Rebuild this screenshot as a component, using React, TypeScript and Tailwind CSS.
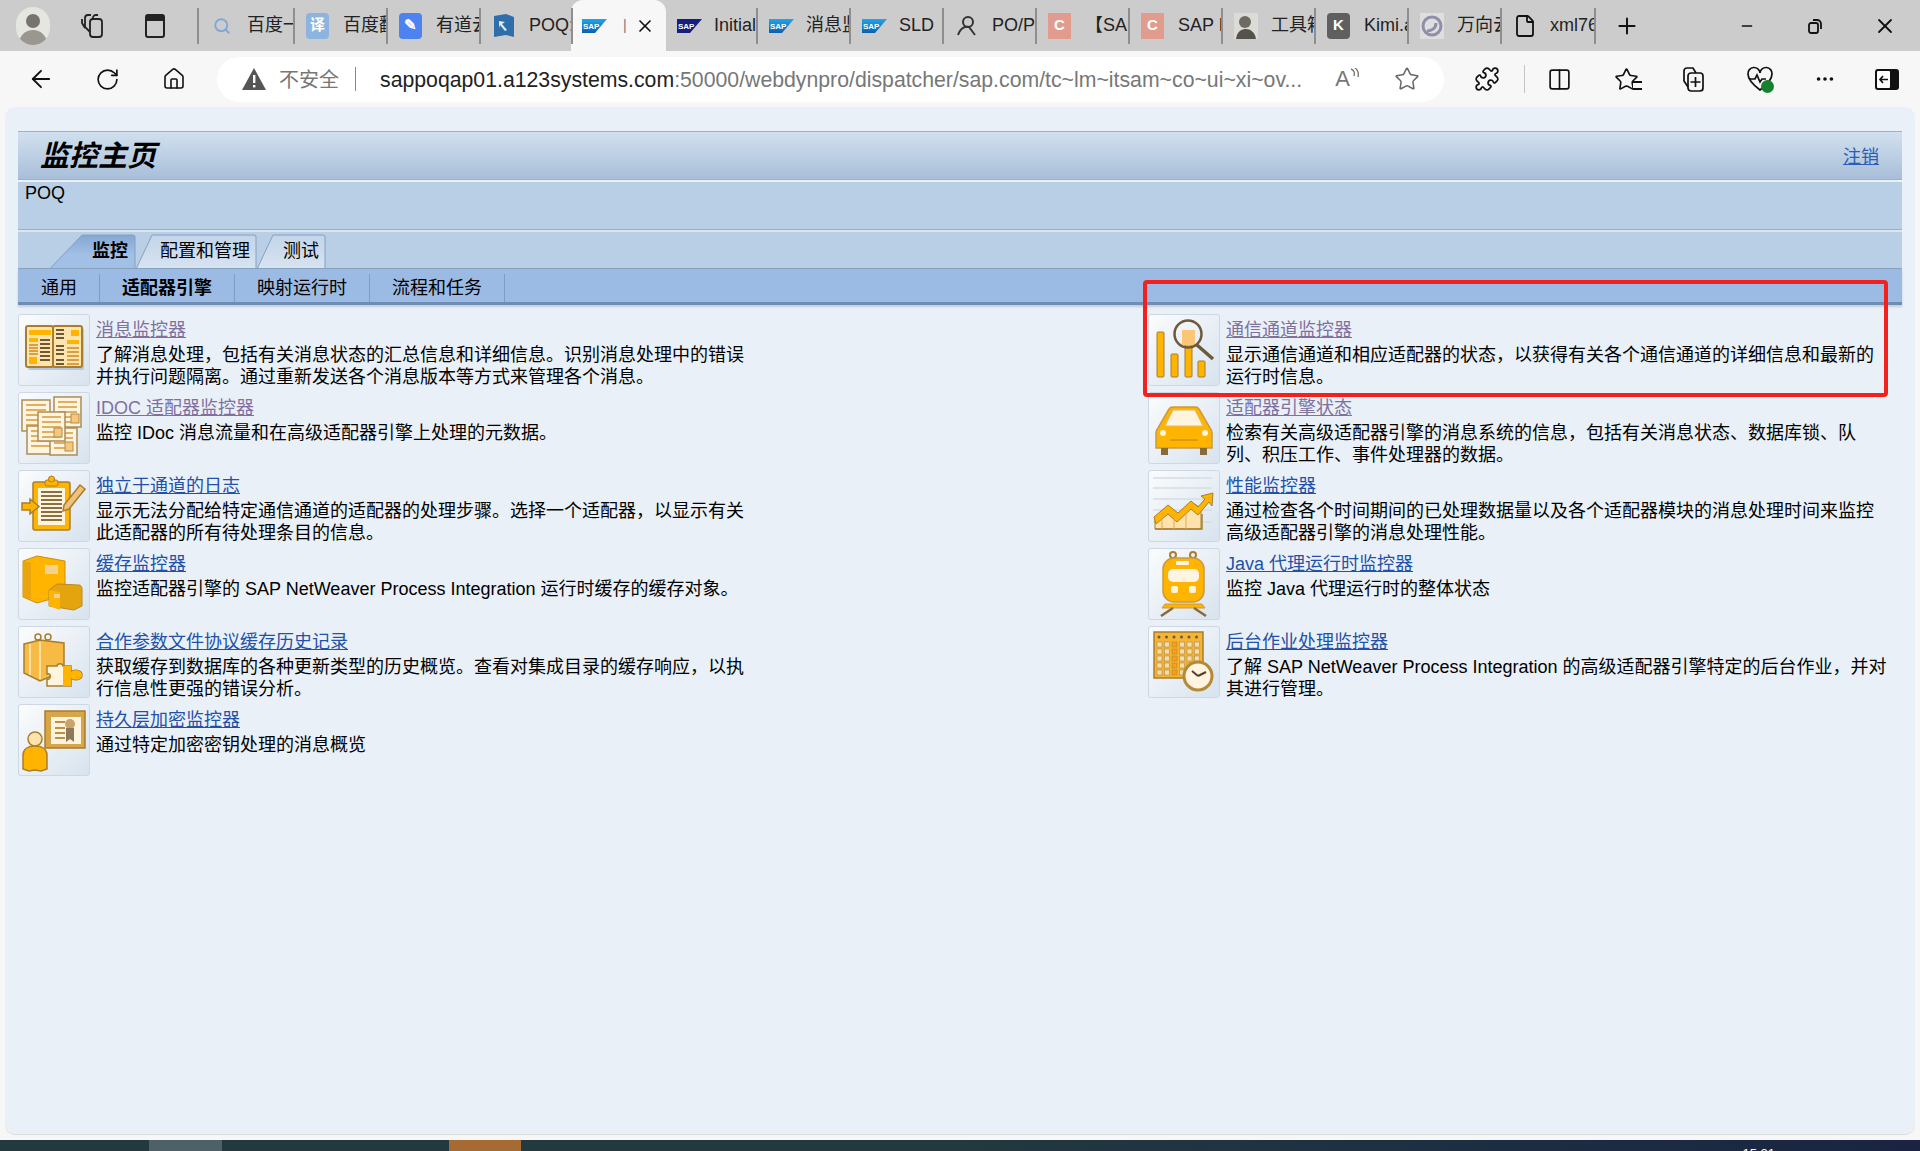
import { ArrowLeft, RotateCw, Home, Star, Puzzle, Columns2, Plus, Minus, X, MoreHorizontal, Search, File } from "lucide-react";
import type { ReactNode } from "react";

const O = "#ffb400";
const D = "#a97d2e";
const L = "#ffe3ad";
const P = "#fff4df";
const S = "#b3c7de";

const cjk = "font-['Liberation_Sans','Noto_Sans_CJK_SC',sans-serif]";

const SapLogo = ({ dark }: { dark?: boolean }) => (
  <svg width="25" height="14" viewBox="0 0 25 14">
    <defs>
      <linearGradient id="sap" x1="0" y1="0" x2="0" y2="1">
        <stop offset="0" stopColor="#22a5e8" />
        <stop offset="1" stopColor="#0c5fb0" />
      </linearGradient>
    </defs>
    <polygon points="0,0 25,0 13,14 0,14" fill={dark ? "#14207f" : "url(#sap)"} />
    <text x="1" y="10" fontSize="8" fontWeight="700" fill="#fff" fontFamily="Liberation Sans">SAP</text>
  </svg>
);

const Letter = ({ c, bg, rounded }: { c: string; bg: string; rounded?: boolean }) => (
  <span className={`flex h-[26px] w-[23px] items-center justify-center text-[15px] font-bold text-white ${rounded ? "rounded" : ""}`} style={{ background: bg }}>
    {c}
  </span>
);

const browserTabs: { w: number; label: string; icon: ReactNode }[] = [
  { w: 96, label: "百度一下", icon: <span className="pl-[3px]"><Search size={18} color="#7fa8d8" strokeWidth={2.5} /></span> },
  { w: 93, label: "百度翻译", icon: <Letter c="译" bg="#8cb4de" rounded /> },
  { w: 93, label: "有道云笔记", icon: <Letter c="✎" bg="#4d82f0" rounded /> },
  { w: 92, label: "POQ: SAP", icon: (
    <svg width="24" height="26" viewBox="0 0 24 26"><path d="M2 3l12-2 8 3v20l-8-2-12 2z" fill="#2f6ea8" /><path d="M7 8l6 1-3 2 5 6-2 1-5-6-1 3z" fill="#dfeaf5" /></svg>
  ) },
];

const browserTabsAfter: { w: number; label: string; icon: ReactNode }[] = [
  { w: 92, label: "Initial", icon: <SapLogo dark /> },
  { w: 93, label: "消息监控", icon: <SapLogo /> },
  { w: 93, label: "SLD", icon: <SapLogo /> },
  { w: 93, label: "PO/PI", icon: (
    <svg width="24" height="24" viewBox="0 0 24 24" fill="none" stroke="#333" strokeWidth="2"><circle cx="13" cy="8" r="5" /><path d="M3 21c3-8 8-9 11-8l6 8" /></svg>
  ) },
  { w: 93, label: "【SAP", icon: <Letter c="C" bg="#e29c8e" /> },
  { w: 93, label: "SAP PI", icon: <Letter c="C" bg="#e29c8e" /> },
  { w: 93, label: "工具箱", icon: (
    <svg width="24" height="26" viewBox="0 0 24 26"><rect width="24" height="26" fill="#dcdcd6" /><circle cx="11" cy="9" r="6" fill="#6d6a62" /><path d="M2 26c1-8 6-10 10-10s9 3 10 10z" fill="#55524c" /></svg>
  ) },
  { w: 93, label: "Kimi.ai", icon: <Letter c="K" bg="#5f5f5f" rounded /> },
  { w: 93, label: "万向云", icon: (
    <svg width="24" height="26" viewBox="0 0 24 26" fill="none"><rect width="24" height="26" fill="#dedede" /><circle cx="12" cy="13" r="9" stroke="#8f8fac" strokeWidth="3" /><path d="M7 18c5 0 9-3 9-8" stroke="#8f8fac" strokeWidth="3" /></svg>
  ) },
  { w: 94, label: "xml76", icon: <File size={24} strokeWidth={1.8} color="#111" /> },
];

const BrowserTab = ({ w, label, icon }: { w: number; label: string; icon: ReactNode }) => (
  <div className="relative flex h-[36px] shrink-0 items-center border-r-2 border-[#8e8e8e] pl-[11px]" style={{ width: w }}>
    <span className="flex w-[37px] shrink-0 justify-start">{icon}</span>
    <span className="overflow-hidden whitespace-nowrap text-[18px] text-[#222]">{label}</span>
  </div>
);

const ToolBtn = ({ w = 67, children }: { w?: number; children: ReactNode }) => (
  <div className="flex h-full shrink-0 items-center justify-center" style={{ width: w }}>{children}</div>
);

const IconTile = ({ children }: { children: ReactNode }) => (
  <div className="h-[72px] w-[72px] shrink-0 rounded-[3px] border border-[#cdd8e4] bg-gradient-to-br from-[#fbfcfd] to-[#d8e3ee]">
    <svg width="70" height="70" viewBox="1 1 70 70">{children}</svg>
  </div>
);

const lines = (x1: number, x2: number, ys: number[], c = "#c9a050", w = 2) =>
  ys.map((y) => <line key={y} x1={x1} x2={x2} y1={y} y2={y} stroke={c} strokeWidth={w} />);

const DocSheet = ({ x, y, w, h }: { x: number; y: number; w: number; h: number }) => (
  <g>
    <rect x={x} y={y} width={w} height={h} fill={P} stroke="#a98d5a" strokeWidth="1.5" />
    {lines(x + 4, x + w - 4, [y + 5, y + 10, y + 15, y + 20, y + 25].filter((v) => v < y + h - 3), "#e0b060", 2)}
  </g>
);

const MessageIcon = () => (
  <g>
    <rect x="10" y="14" width="56" height="42" rx="2" fill={S} />
    <rect x="8" y="12" width="27" height="41" rx="2" fill={L} stroke={D} strokeWidth="2" />
    <rect x="35" y="12" width="29" height="41" rx="2" fill={L} stroke={D} strokeWidth="2" />
    <rect x="11" y="16" width="22" height="5" fill={O} />
    <rect x="11" y="24" width="9" height="4" fill={O} />
    {lines(11, 20, [31, 34, 37, 40], "#d8a040")}
    <rect x="11" y="43" width="8" height="7" fill={O} />
    {lines(22, 32, [26, 30, 34, 38, 42, 46], "#6d5a38")}
    {lines(38, 46, [16, 20, 24, 32, 36, 40, 46, 50], "#6d5a38")}
    <rect x="53" y="16" width="8" height="6" fill={O} />
    <rect x="49" y="26" width="12" height="4" fill={O} />
    {lines(49, 61, [34, 38, 42, 46, 50], "#d8a040")}
  </g>
);

const IdocIcon = () => (
  <g>
    <DocSheet x={4} y={8} w={28} h={31} />
    <DocSheet x={36} y={5} w={27} h={30} />
    <DocSheet x={9} y={34} w={28} h={28} />
    <DocSheet x={32} y={36} w={27} h={27} />
    <rect x="53" y="22" width="8" height="9" fill="#fbc777" stroke="#a98d5a" />
    <rect x="47" y="50" width="8" height="9" fill="#fbc777" stroke="#a98d5a" />
    <DocSheet x={20} y={20} w={27} h={29} />
    <rect x="36" y="36" width="8" height="9" fill="#fbc777" stroke="#a98d5a" />
  </g>
);

const LogIcon = () => (
  <g>
    <rect x="15" y="12" width="37" height="48" rx="2" fill={O} stroke={D} strokeWidth="1.5" />
    <rect x="20" y="18" width="27" height="37" fill={P} />
    {lines(23, 44, [22, 26, 30, 34, 38, 42, 46, 50], "#8b7040", 2)}
    <rect x="27" y="10" width="13" height="6" rx="2" fill={O} stroke={D} />
    <circle cx="33.5" cy="9" r="3" fill={O} stroke={D} />
    <path d="M46 35L62 15l5 4-16 20-6 2z" fill="#eec27a" stroke={D} strokeWidth="1.5" />
    <path d="M4 33h8v-4l9 7.5-9 7.5v-4H4z" fill={O} stroke={D} strokeWidth="1.5" />
  </g>
);

const CacheIcon = () => (
  <g>
    <path d="M5 13l14-5 28 5v34l-28 8-14-6z" fill={O} stroke="#c98f10" />
    <path d="M5 13l8 2v37l-8-3z" fill="#e9a50c" />
    <rect x="27" y="17" width="13" height="9" fill="#f3d28f" />
    <path d="M31 42l8-6 22 1c2 0 3 2 3 4v17l-8 4-25-4z" fill="#e3a40e" stroke="#bb8a20" />
    <path d="M31 42l11 2v18l-11-4z" fill={O} />
    <rect x="36" y="46" width="6" height="4" fill="#f3d28f" />
  </g>
);

const PartnerIcon = () => (
  <g>
    <path d="M6 18l16-4 24 3v28l-24 10-16-8z" fill="#f7bb45" stroke={D} strokeWidth="1.5" />
    <path d="M12 18v31M22 16v37" stroke="#fbe0a6" strokeWidth="2" />
    <circle cx="20" cy="11" r="3" fill="none" stroke={D} strokeWidth="1.5" />
    <circle cx="30" cy="11" r="3" fill="none" stroke={D} strokeWidth="1.5" />
    <path d="M29 40h10c0-3 6-3 6 0h8v6c3-3 11-2 11 3s-8 6-11 3v8H29v-7c4 2 5-7 0-5z" fill={P} stroke={D} strokeWidth="1.5" />
    <path d="M45 40h8v6c3-3 11-2 11 3s-8 6-11 3v8h-8z" fill={O} />
  </g>
);

const CryptIcon = () => (
  <g>
    <rect x="27" y="7" width="40" height="37" fill="#d8a548" stroke={D} strokeWidth="1.5" />
    <rect x="33" y="13" width="30" height="27" fill={P} />
    {lines(37, 47, [18, 24, 29, 34], "#c09040", 2)}
    <circle cx="52" cy="20" r="5" fill="#c9a367" />
    <path d="M48 24v14l4-3 4 3V24z" fill="#8e7a5a" />
    <circle cx="17" cy="35" r="7" fill={L} stroke={D} strokeWidth="1.5" />
    <path d="M5 65V51c0-6 5-9 12-9s12 3 12 9v14l-6 2-6-1-6 1z" fill={O} stroke={D} strokeWidth="1.5" />
  </g>
);

const ChannelIcon = () => (
  <g>
    <rect x="9" y="18" width="7" height="45" rx="1" fill={O} stroke={D} />
    <rect x="23" y="40" width="7" height="23" rx="1" fill={O} stroke={D} />
    <rect x="37" y="28" width="7" height="35" rx="1" fill={O} stroke={D} />
    <rect x="50" y="47" width="7" height="16" rx="1" fill={O} stroke={D} />
    <rect x="34" y="16" width="13" height="15" fill="#fbc777" />
    <circle cx="40" cy="20" r="13.5" fill="none" stroke="#6d5a3a" strokeWidth="2.5" />
    <path d="M49 31l16 14" stroke="#6d5a3a" strokeWidth="3.5" />
  </g>
);

const EngineIcon = () => (
  <g>
    <path d="M10 36l11-19c1-2 2-2 4-2h22c2 0 3 0 4 2l11 19c2 2 2 3 2 5v15H8V41c0-2 0-3 2-5z" fill={O} stroke="#c79a46" strokeWidth="1.5" />
    <path d="M17 34l8-16h22l8 16z" fill={P} stroke="#e8b860" strokeWidth="1" />
    <circle cx="15" cy="41" r="3" fill={P} /><circle cx="57" cy="41" r="3" fill={P} />
    <rect x="13" y="56" width="7" height="7" fill="#8a6a3a" /><rect x="52" y="56" width="7" height="7" fill="#8a6a3a" />
    <path d="M22 48h28" stroke="#d89a10" strokeWidth="2" />
  </g>
);

const PerfIcon = () => (
  <g>
    {lines(5, 64, [8, 18, 29, 40, 52], "#d5dde6", 1.5)}
    <path d="M7 49l13-12 9 8 14-13 10 6 V59H7z" fill={L} stroke={D} strokeWidth="1" />
    <path d="M7 59h47V44" fill="none" stroke={D} strokeWidth="1.5" />
    <path d="M6 47l14-12 10 8 13-12 7 6 7-8-4-3 12-3-1 13-3-4-11 13-7-6-14 13-9-8-12 10z" fill={O} stroke={D} strokeWidth="1" />
    <path d="M14 43v16M26 44v15M38 40v19" stroke="#e8a64a" />
  </g>
);

const JavaIcon = () => (
  <g>
    <circle cx="25" cy="7" r="3" fill="none" stroke={D} strokeWidth="2" />
    <circle cx="45" cy="7" r="3" fill="none" stroke={D} strokeWidth="2" />
    <rect x="15" y="10" width="41" height="44" rx="11" fill={O} stroke="#c79a46" strokeWidth="1.5" />
    <rect x="28" y="13" width="13" height="4" rx="1" fill={P} />
    <rect x="20" y="21" width="31" height="13" rx="5" fill={P} />
    <rect x="23" y="38" width="7" height="7" rx="2" fill={P} /><rect x="41" y="38" width="7" height="7" rx="2" fill={P} />
    <path d="M17 56h37l3 4H14z" fill={O} stroke="#c79a46" />
    <path d="M13 68l12-8M58 68l-12-8" stroke="#8a6a3a" strokeWidth="2.5" />
  </g>
);

const cells = [0, 1, 2, 3, 4, 5];
const BatchIcon = () => (
  <g>
    <rect x="6" y="6" width="49" height="46" fill="#f6b432" stroke={D} strokeWidth="1.5" />
    {cells.map((c) => <circle key={c} cx={11 + c * 7.5} cy={11} r="1.5" fill="#6d5a3a" />)}
    {cells.map((c) => cells.slice(0, 5).map((r) => (
      <rect key={`${c}-${r}`} x={9 + c * 7.5} y={16 + r * 7} width="5" height="5" fill={c === 2 ? "#ff9f00" : "#f7dcab"} stroke="#a88a50" strokeWidth="0.6" />
    )))}
    <circle cx="50" cy="50" r="14" fill={P} stroke="#b48a35" strokeWidth="3" />
    <path d="M50 50l-6-5M50 50l8-4" stroke="#4f412a" strokeWidth="2" />
  </g>
);

type Item = { title: string; desc: ReactNode; visited?: boolean; icon: ReactNode };

const leftItems: Item[] = [
  { title: "消息监控器", visited: true, icon: <MessageIcon />, desc: <>了解消息处理，包括有关消息状态的汇总信息和详细信息。识别消息处理中的错误<br />并执行问题隔离。通过重新发送各个消息版本等方式来管理各个消息。</> },
  { title: "IDOC 适配器监控器", visited: true, icon: <IdocIcon />, desc: "监控 IDoc 消息流量和在高级适配器引擎上处理的元数据。" },
  { title: "独立于通道的日志", icon: <LogIcon />, desc: <>显示无法分配给特定通信通道的适配器的处理步骤。选择一个适配器，以显示有关<br />此适配器的所有待处理条目的信息。</> },
  { title: "缓存监控器", icon: <CacheIcon />, desc: "监控适配器引擎的 SAP NetWeaver Process Integration 运行时缓存的缓存对象。" },
  { title: "合作参数文件协议缓存历史记录", icon: <PartnerIcon />, desc: <>获取缓存到数据库的各种更新类型的历史概览。查看对集成目录的缓存响应，以执<br />行信息性更强的错误分析。</> },
  { title: "持久层加密监控器", icon: <CryptIcon />, desc: "通过特定加密密钥处理的消息概览" },
];

const rightItems: Item[] = [
  { title: "通信通道监控器", visited: true, icon: <ChannelIcon />, desc: <>显示通信通道和相应适配器的状态，以获得有关各个通信通道的详细信息和最新的<br />运行时信息。</> },
  { title: "适配器引擎状态", visited: true, icon: <EngineIcon />, desc: <>检索有关高级适配器引擎的消息系统的信息，包括有关消息状态、数据库锁、队<br />列、积压工作、事件处理器的数据。</> },
  { title: "性能监控器", icon: <PerfIcon />, desc: <>通过检查各个时间期间的已处理数据量以及各个适配器模块的消息处理时间来监控<br />高级适配器引擎的消息处理性能。</> },
  { title: "Java 代理运行时监控器", icon: <JavaIcon />, desc: "监控 Java 代理运行时的整体状态" },
  { title: "后台作业处理监控器", icon: <BatchIcon />, desc: <>了解 SAP NetWeaver Process Integration 的高级适配器引擎特定的后台作业，并对<br />其进行管理。</> },
];

const MonitorRow = ({ item }: { item: Item }) => (
  <div className="flex h-[78px] gap-[6px]">
    <IconTile>{item.icon}</IconTile>
    <div className="pt-[5px] text-[18px] leading-[22px] whitespace-nowrap text-black">
      <a className={`block underline ${item.visited ? "text-[#80709f]" : "text-[#2350a8]"}`}>{item.title}</a>
      <p className="mt-[3px]">{item.desc}</p>
    </div>
  </div>
);

const WdTab = ({ w, text, textX, active, slant }: { w: number; text: string; textX: number; active?: boolean; slant: number }) => (
  <div className="relative h-[34px] shrink-0" style={{ width: w }}>
    <svg className="absolute inset-0" width={w} height="34" viewBox={`0 0 ${w} 34`}>
      <defs>
        <linearGradient id="tabOn" x1="0" y1="0" x2="0" y2="1"><stop offset="0" stopColor="#84a7d3" /><stop offset="0.6" stopColor="#a2bfe5" /></linearGradient>
        <linearGradient id="tabOff" x1="0" y1="0" x2="0" y2="1"><stop offset="0" stopColor="#c3d5e9" /><stop offset="1" stopColor="#d6e3f1" /></linearGradient>
      </defs>
      <path d={`M0.5 34L${slant} 1H${w - 3}Q${w - 1} 1 ${w - 1} 3V34`} fill={active ? "url(#tabOn)" : "url(#tabOff)"} stroke="#87a0bc" />
    </svg>
    <span className={`absolute top-[6px] text-[18px] leading-[22px] text-black ${active ? "font-bold" : ""}`} style={{ left: textX }}>{text}</span>
  </div>
);

const SubNavItem = ({ text, bold }: { text: string; bold?: boolean }) => (
  <div className={`flex h-[28px] items-center border-r border-[#7f9dc2] px-[22px] text-[18px] leading-[22px] text-black ${bold ? "font-bold" : ""}`}>{text}</div>
);

export default function App() {
  return (
    <div className={`relative flex h-[1151px] w-[1920px] flex-col overflow-hidden bg-[#f7f7f7] ${cjk}`}>
      {/* browser tabs */}
      <div className="flex h-[51px] shrink-0 items-center bg-[#cccccc]">
        <div className="flex w-[66px] justify-center">
          <div className="relative h-[38px] w-[34px] overflow-hidden rounded-full bg-[#e6e6e0]">
            <div className="mx-auto mt-[7px] h-[14px] w-[14px] rounded-full bg-[#77736d]" />
            <div className="mx-auto mt-[2px] h-[16px] w-[28px] rounded-t-full bg-[#9a9690]" />
          </div>
        </div>
        <div className="flex w-[52px] justify-center">
          <svg width="26" height="28" viewBox="0 0 26 28" fill="none" stroke="#222" strokeWidth="1.8"><rect x="11" y="7" width="12" height="18" rx="3" /><path d="M11 20L6 15V6a3 3 0 0 1 3-3h3M6 16L3 11V7" /><path d="M14 7V5a3 3 0 0 1 3-2h2" /></svg>
        </div>
        <div className="flex w-[74px] justify-center">
          <div className="h-[24px] w-[20px] rounded-[3px] border-2 border-t-[7px] border-[#222]" />
        </div>
        <div className="ml-[5px] h-[36px] w-[2px] bg-[#8e8e8e]" />
        {browserTabs.map((t) => <BrowserTab key={t.label} {...t} />)}
        <div className="-ml-[2px] flex h-[51px] w-[95px] shrink-0 items-center self-end rounded-t-[12px] bg-[#f7f7f7] pl-[11px]">
          <SapLogo />
          <span className="ml-[16px] mr-[8px] text-[14px] text-[#777]">|</span>
          <X size={20} color="#111" strokeWidth={2} />
        </div>
        {browserTabsAfter.map((t) => <BrowserTab key={t.label} {...t} />)}
        <div className="flex w-[62px] justify-center"><Plus size={26} strokeWidth={1.8} color="#111" /></div>
        <div className="ml-[77px] flex w-[24px] justify-center"><Minus size={16} strokeWidth={2} color="#111" /></div>
        <div className="ml-[44px] flex w-[24px] justify-center">
          <svg width="16" height="18" viewBox="0 0 16 18" fill="none" stroke="#111" strokeWidth="1.8"><rect x="2" y="6" width="9" height="10" rx="2" /><path d="M6 3h4a4 4 0 0 1 4 4v5" /></svg>
        </div>
        <div className="ml-[46px] flex w-[24px] justify-center"><X size={24} strokeWidth={1.8} color="#111" /></div>
      </div>

      {/* address bar */}
      <div className="flex h-[56px] shrink-0 items-center pl-[8px]">
        <ToolBtn w={66}><ArrowLeft size={28} strokeWidth={1.6} color="#111" /></ToolBtn>
        <ToolBtn w={67}><RotateCw size={25} strokeWidth={1.6} color="#111" /></ToolBtn>
        <ToolBtn w={66}><Home size={24} strokeWidth={1.6} color="#111" /></ToolBtn>
        <div className="ml-[10px] flex h-[45px] w-[1227px] shrink-0 items-center rounded-full bg-white pl-[25px] text-[20px]">
          <svg width="24" height="24" viewBox="0 0 24 24"><path d="M12 1L24 23H0z" fill="#555" /><rect x="11" y="8" width="2.4" height="8" fill="#fff" /><rect x="11" y="18" width="2.4" height="2.4" fill="#fff" /></svg>
          <span className="ml-[13px] pt-[1px] text-[#777]">不安全</span>
          <span className="ml-[16px] h-[24px] w-[1px] bg-[#888]" />
          <span className="ml-[24px] whitespace-nowrap pt-[3px] text-[21.25px] text-[#222]">sappoqap01.a123systems.com<span className="text-[#777]">:50000/webdynpro/dispatcher/sap.com/tc~lm~itsam~co~ui~xi~ov...</span></span>
          <div className="ml-auto flex items-center gap-[35px] pr-[24px]">
            <span className="flex items-start text-[#777]">
              <span className="text-[22px] leading-none">A</span>
              <svg width="9" height="14" viewBox="0 0 9 14" fill="none" stroke="#777" strokeWidth="1.4"><path d="M1 1c3 1 4 4 3 7M5 0c3 2 4 5 3 9" /></svg>
            </span>
            <Star size={26} strokeWidth={1.4} color="#666" />
          </div>
        </div>
        <div className="ml-[6px] flex h-full w-[74px] items-center justify-center"><Puzzle size={26} strokeWidth={1.6} color="#111" /></div>
        <div className="h-[28px] w-[1px] bg-[#c4c4c4]" />
        <ToolBtn w={68}><Columns2 size={25} strokeWidth={1.6} color="#111" /></ToolBtn>
        <ToolBtn w={66}>
          <span className="relative"><Star size={25} strokeWidth={1.6} color="#111" /><span className="absolute -right-[3px] bottom-[2px] h-[9px] w-[9px] border-y-2 border-[#111] bg-[#f7f7f7]" /></span>
        </ToolBtn>
        <ToolBtn w={67}>
          <svg width="24" height="28" viewBox="0 0 24 28" fill="none" stroke="#111" strokeWidth="1.7"><rect x="7" y="8" width="15" height="18" rx="3" /><path d="M7 22L3 16V6a3 3 0 0 1 3-3h6l3 5M14.5 12v10M9.5 17h10" /></svg>
        </ToolBtn>
        <ToolBtn w={68}>
          <span className="relative">
            <svg width="28" height="26" viewBox="0 0 28 26" fill="none" stroke="#111" strokeWidth="1.7"><path d="M14 24C6 18 2 13 2 8a6 6 0 0 1 12-1 6 6 0 0 1 12 1c0 5-4 10-12 16z" /><path d="M3 13h6l2-4 3 7 2-3h4" /></svg>
            <span className="absolute -bottom-[1px] right-0 h-[13px] w-[13px] rounded-full bg-[#15822e]" />
          </span>
        </ToolBtn>
        <ToolBtn w={62}><MoreHorizontal size={22} strokeWidth={2} color="#111" /></ToolBtn>
        <ToolBtn w={62}>
          <svg width="26" height="23" viewBox="0 0 26 23"><rect x="1" y="1" width="24" height="21" rx="3" fill="#111" /><rect x="3" y="3" width="13" height="17" rx="1" fill="#fff" /><path d="M14 11.5H6M9 8l-3 3.5L9 15" fill="none" stroke="#111" strokeWidth="1.7" /></svg>
        </ToolBtn>
      </div>

      {/* page */}
      <div className="mx-[5px] mb-[5px] flex min-h-0 flex-1 flex-col rounded-[10px] border-b border-[#dcdcdc] bg-[#e9f0f7] px-[13px] pt-[24px]">
        <div className="w-[1884px]">
          <div className="flex h-[49px] items-center justify-between border-y border-[#9db1c6] bg-gradient-to-b from-[#d2e0ee] to-[#a8bfd9] pl-[22px] pr-[23px] pt-[2px]">
            <h1 className="text-[29px] font-bold italic text-black">监控主页</h1>
            <a className="mt-[2px] text-[18px] text-[#2a5fb5] underline">注销</a>
          </div>
          <div className="h-[50px] border-t-2 border-b border-t-[#e9f0f7] border-b-[#9db1c6] bg-[#b9cfe6] pl-[7px] text-[18px] leading-[22px] text-black">POQ</div>
          <div className="flex h-[38px] items-end border-t-2 border-[#d9e5f1] bg-[#b9cfe6] pl-[32px]">
            <WdTab w={86} text="监控" textX={42} active slant={32} />
            <WdTab w={121} text="配置和管理" textX={24} slant={16} />
            <WdTab w={69} text="测试" textX={26} slant={16} />
          </div>
          <div className="flex h-[37px] items-center border-t border-[#87a0bc] border-b-[3px] border-b-[#6f8db4] bg-[#9cbbe4] pl-[1px] pt-[5px] shadow-[0_2px_2px_#c3ccd6]">
            <SubNavItem text="通用" />
            <SubNavItem text="适配器引擎" bold />
            <SubNavItem text="映射运行时" />
            <SubNavItem text="流程和任务" />
          </div>
        </div>
        <div className="mt-[9px] flex w-[1884px]">
          <div className="w-[1130px] shrink-0">
            {leftItems.map((it) => <MonitorRow key={it.title} item={it} />)}
          </div>
          <div>
            {rightItems.map((it) => <MonitorRow key={it.title} item={it} />)}
          </div>
        </div>
      </div>

      {/* taskbar strip */}
      <div className="relative h-[11px] shrink-0 overflow-hidden bg-gradient-to-r from-[#22393f] via-[#22393f] to-[#1a2442]">
        <div className="flex h-full pl-[149px]">
          <div className="h-full w-[73px] bg-[#4d6166]" />
          <div className="ml-[227px] h-full w-[72px] bg-[#a66a33]" />
        </div>
        <span className="absolute right-[145px] top-[7px] text-[13px] leading-none text-white">15:21</span>
      </div>

      {/* red annotation */}
      <div className="absolute left-[1143px] top-[280px] h-[117px] w-[745px] rounded-[4px] border-[4px] border-[#f3211e]" />
    </div>
  );
}
